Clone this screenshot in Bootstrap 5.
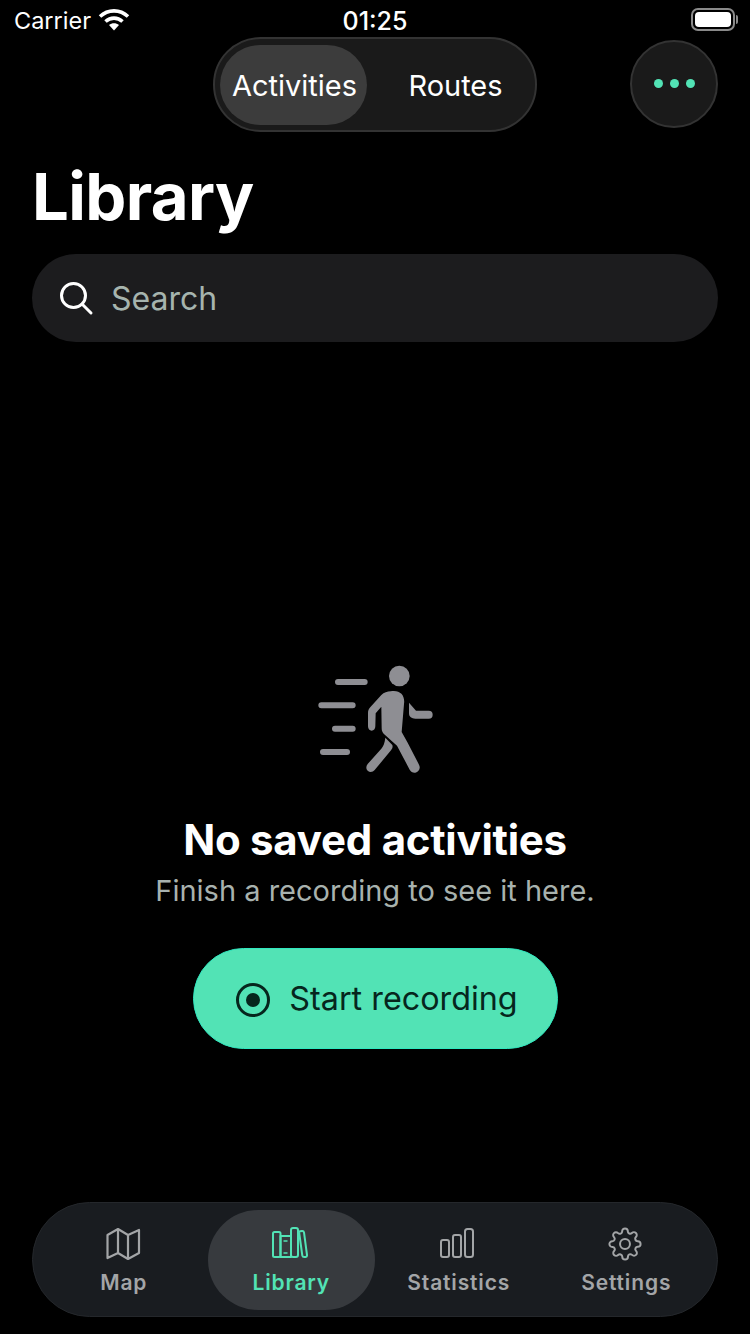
<!DOCTYPE html>
<html lang="en">
<head>
<meta charset="utf-8">
<title>Library</title>
<link href="https://cdn.jsdelivr.net/npm/bootstrap@5.3.0/dist/css/bootstrap.min.css" rel="stylesheet">
<style>
html,body{height:100%;}
body{width:750px;height:1334px;background:#000;color:#fff;font-family:Inter,"Liberation Sans",sans-serif;overflow:hidden;}
.phone{height:1334px;}
.statusbar{height:37px;padding:6px 15px 0 14px;font-size:23.5px;line-height:30px;position:relative;}
.status-time{position:absolute;left:0;right:0;top:6px;text-align:center;font-weight:500;font-size:25px;}
.wifi-ic{margin-top:2px;margin-left:-1px;}
.batt{position:relative;width:44px;height:23px;border:2px solid #8a8a8a;border-radius:7px;padding:2px;margin-top:2px;}
.batt span{display:block;height:100%;background:#fff;border-radius:4px;}
.batt::after{content:"";position:absolute;right:-5px;top:5px;width:2px;height:9px;background:#8a8a8a;border-radius:0 2px 2px 0;}
.topnav{display:grid;grid-template-columns:1fr auto 1fr;align-items:center;padding:0 32px;height:95px;}
.seg{width:324px;height:95px;background:#1a1a1a;border:2px solid #333;border-radius:48px;padding:6px 5px;font-size:29px;}
.seg-item{height:80px;display:flex;align-items:center;justify-content:center;border-radius:40px;padding-top:2px;}
.seg-on{width:147px;background:#3c3c3c;padding-left:2px;}
.seg-off{flex:1;padding-left:14px;}
.morebtn{width:88px;height:88px;border-radius:50%;background:#1a1a1a;border:2px solid #333;justify-self:end;gap:7px;margin:-1px 0 1px;}
.morebtn i{width:9px;height:9px;border-radius:50%;background:#52e3b5;display:block;}
.page-title{font-size:65.200px;font-weight:700;line-height:80px;margin:25px 0 0 32px;letter-spacing:-.6px;}
.searchbox{height:88px;margin:17px 32px 0;background:#1c1c1e;border-radius:44px;padding-left:26px;gap:17px;font-size:32px;color:#a6b4ae;}
.searchbox span{padding-top:2px;}
.empty{padding-top:308px;}
.empty-title{font-size:42px;font-weight:700;line-height:50px;margin:30px 0 0;letter-spacing:-.25px;}
.empty-sub{font-size:29px;line-height:34px;color:#a8b2ae;margin:9px 0 0;}
.startbtn{width:365px;height:101px;margin-top:40px;border-radius:51px;background:#52e3b5;border:1px solid #30e8c0;color:#06261d;font-size:32.300px;gap:18px;padding:2px 0 0 3px;}
.startbtn:hover,.startbtn:active{background:#52e3b5;color:#06261d;}
.tabbar{position:absolute;left:32px;top:1202px;width:686px;height:115px;background:#191c20;border:1px solid #24272b;border-radius:58px;padding:7px 7px 6px;}
.tabbar-item{width:168px;height:100px;border-radius:50px;color:#a3a5a7;font-size:21px;font-weight:600;letter-spacing:.85px;line-height:26px;gap:9px;padding-top:17px;}
.tabbar-item svg{margin-left:-3px;}
.tabbar-item .map-ic{margin-left:0;}
.tabbar-on{background:#373a3e;color:#52e3b5;}
.phone-inner{position:relative;height:100%;}
</style>
</head>
<body>
<div class="phone-inner d-flex flex-column phone">
  <div class="statusbar d-flex justify-content-between">
    <div class="d-flex align-items-start gap-2"><span>Carrier</span>
      <svg class="wifi-ic" width="32" height="24" viewBox="0 0 32 24"><path d="M2 8.500C10 1 22 1 30 8.500" fill="none" stroke="#fff" stroke-width="3.600"/><path d="M7.500 13.500c5-4.500 12-4.500 17 0" fill="none" stroke="#fff" stroke-width="3.600"/><path d="M16 22.500l-5-5.500c3-2.300 7-2.300 10 0z" fill="#fff"/></svg>
    </div>
    <div class="status-time">01:25</div>
    <div class="batt"><span></span></div>
  </div>
  <div class="topnav">
    <div></div>
    <div class="seg d-flex">
      <div class="seg-item seg-on">Activities</div>
      <div class="seg-item seg-off">Routes</div>
    </div>
    <div class="morebtn d-flex align-items-center justify-content-center"><i></i><i></i><i></i></div>
  </div>
  <h1 class="page-title">Library</h1>
  <div class="searchbox d-flex align-items-center">
    <svg width="36" height="36" viewBox="0 0 36 36" fill="none" stroke="#fff" stroke-width="3"><circle cx="15.500" cy="15.500" r="12"/><path d="M24 24l9 9" stroke-linecap="round"/></svg>
    <span>Search</span>
  </div>
  <div class="empty d-flex flex-column align-items-center text-center">
    <svg width="150" height="135" viewBox="0 0 450 405" fill="none" stroke="#8e8e93" stroke-linecap="round" stroke-linejoin="round">
      <circle cx="298" cy="78" r="31" fill="#8e8e93" stroke="none"/>
      <path d="M114 96h80M64 166h94M105 236h53M69 306h72" stroke-width="18"/>
      <path d="M272 124c28-5 44 12 40 38l-7 84 18 32 34 66c6 12-1 22-11 24-7 1-13-2-17-9l-38-72-40-36c-4-4-6-9-6-16l-1-65-17 20-1 39c0 8-5 13-11 13s-11-5-11-13v-40c0-8 2-13 8-19l32-35c8-8 18-10 28-11z" fill="#8e8e93" stroke="none"/>
      <path d="M256 263l21 22c2 6 0 11-4 16l-49 59c-5 6-14 8-20 3-6-5-7-14-1-21l41-46c6-7 10-17 12-33z" fill="#8e8e93" stroke="none"/>
      <path d="M327 158l21 24h38a12 12 0 0 1 0 24h-40c-11 0-19-5-19-16z" fill="#8e8e93" stroke="none"/>
    </svg>
    <h2 class="empty-title">No saved activities</h2>
    <p class="empty-sub">Finish a recording to see it here.</p>
    <button class="btn startbtn d-flex align-items-center justify-content-center" type="button">
      <svg width="36" height="36" viewBox="0 0 36 36"><circle cx="18" cy="18" r="15.500" fill="none" stroke="#06261d" stroke-width="3"/><circle cx="18" cy="18" r="7" fill="#06261d"/></svg>
      <span>Start recording</span>
    </button>
  </div>
  <nav class="tabbar d-flex">
    <div class="tabbar-item d-flex flex-column align-items-center">
      <svg class="map-ic" width="36" height="34" viewBox="0 0 36 34" fill="none" stroke="#a3a5a7" stroke-width="2.200" stroke-linejoin="round"><path d="M1.500 8L12 2l10 6 11-5v23l-11 6-10-6-10.500 5zM12 2v24M22 8v24"/></svg>
      <span>Map</span>
    </div>
    <div class="tabbar-item tabbar-on d-flex flex-column align-items-center">
      <svg width="36" height="34" viewBox="0 0 36 34" fill="none" stroke="#52e3b5" stroke-width="2" stroke-linejoin="round"><rect x="1" y="5" width="7.500" height="25" rx="1.500"/><rect x="8.500" y="9" width="10.500" height="21"/><rect x="19" y="1" width="7" height="29" rx="2"/><path d="M27 4.500l3-.5c1-.1 1.800.4 2 1.400L35 28c.1 1-.4 1.800-1.300 2h-1.500c-1 0-1.700-.6-1.900-1.500z"/><path d="M11.500 14h4M11.500 26h4" stroke-width="1.500"/></svg>
      <span>Library</span>
    </div>
    <div class="tabbar-item d-flex flex-column align-items-center">
      <svg width="36" height="34" viewBox="0 0 36 34" fill="none" stroke="#a3a5a7" stroke-width="2"><rect x="2" y="13" width="8" height="17" rx="2"/><rect x="14" y="8" width="8" height="22" rx="2"/><rect x="26" y="2" width="8" height="28" rx="2.500"/></svg>
      <span>Statistics</span>
    </div>
    <div class="tabbar-item d-flex flex-column align-items-center">
      <svg width="36" height="34" viewBox="0 0 24 24" fill="none" stroke="#a3a5a7" stroke-width="1.400" stroke-linecap="round" stroke-linejoin="round"><circle cx="12" cy="12" r="3.500"/><path d="M19.400 15a1.650 1.650 0 0 0 .33 1.820l.06.06a2 2 0 0 1 0 2.830 2 2 0 0 1-2.830 0l-.06-.06a1.650 1.650 0 0 0-1.820-.33 1.650 1.650 0 0 0-1 1.510V21a2 2 0 0 1-2 2 2 2 0 0 1-2-2v-.09A1.650 1.650 0 0 0 9 19.400a1.650 1.650 0 0 0-1.820.33l-.06.06a2 2 0 0 1-2.830 0 2 2 0 0 1 0-2.830l.06-.06a1.650 1.650 0 0 0 .33-1.820 1.650 1.650 0 0 0-1.510-1H3a2 2 0 0 1-2-2 2 2 0 0 1 2-2h.09A1.650 1.650 0 0 0 4.600 9a1.650 1.650 0 0 0-.33-1.820l-.06-.06a2 2 0 0 1 0-2.830 2 2 0 0 1 2.830 0l.06.06a1.650 1.650 0 0 0 1.820.33H9a1.650 1.650 0 0 0 1-1.510V3a2 2 0 0 1 2-2 2 2 0 0 1 2 2v.09a1.650 1.650 0 0 0 1 1.510 1.650 1.650 0 0 0 1.820-.33l.06-.06a2 2 0 0 1 2.830 0 2 2 0 0 1 0 2.830l-.06.06a1.650 1.650 0 0 0-.33 1.820V9a1.650 1.650 0 0 0 1.510 1H21a2 2 0 0 1 2 2 2 2 0 0 1-2 2h-.09a1.650 1.650 0 0 0-1.510 1z"/></svg>
      <span>Settings</span>
    </div>
  </nav>
</div>
<script src="https://cdn.jsdelivr.net/npm/bootstrap@5.3.0/dist/js/bootstrap.bundle.min.js"></script>
</body>
</html>
